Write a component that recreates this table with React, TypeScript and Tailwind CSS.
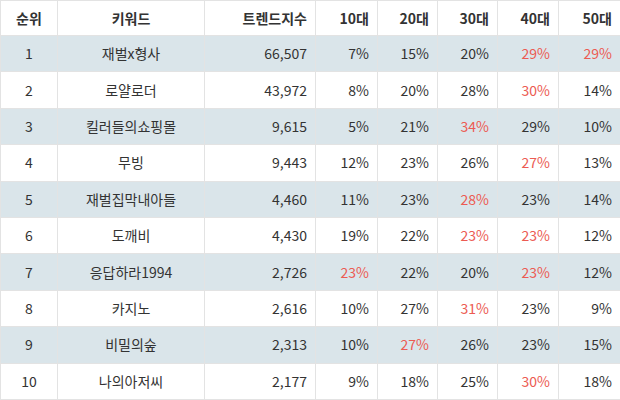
import React from "react";

type Row = { rank: number; kw: string; idx: string; v: [string, boolean][] };

const rows: Row[] = [
  { rank: 1, kw: "재벌x형사", idx: "66,507", v: [["7%", false], ["15%", false], ["20%", false], ["29%", true], ["29%", true]] },
  { rank: 2, kw: "로얄로더", idx: "43,972", v: [["8%", false], ["20%", false], ["28%", false], ["30%", true], ["14%", false]] },
  { rank: 3, kw: "킬러들의쇼핑몰", idx: "9,615", v: [["5%", false], ["21%", false], ["34%", true], ["29%", false], ["10%", false]] },
  { rank: 4, kw: "무빙", idx: "9,443", v: [["12%", false], ["23%", false], ["26%", false], ["27%", true], ["13%", false]] },
  { rank: 5, kw: "재벌집막내아들", idx: "4,460", v: [["11%", false], ["23%", false], ["28%", true], ["23%", false], ["14%", false]] },
  { rank: 6, kw: "도깨비", idx: "4,430", v: [["19%", false], ["22%", false], ["23%", true], ["23%", true], ["12%", false]] },
  { rank: 7, kw: "응답하라1994", idx: "2,726", v: [["23%", true], ["22%", false], ["20%", false], ["23%", true], ["12%", false]] },
  { rank: 8, kw: "카지노", idx: "2,616", v: [["10%", false], ["27%", false], ["31%", true], ["23%", false], ["9%", false]] },
  { rank: 9, kw: "비밀의숲", idx: "2,313", v: [["10%", false], ["27%", true], ["26%", false], ["23%", false], ["15%", false]] },
  { rank: 10, kw: "나의아저씨", idx: "2,177", v: [["9%", false], ["18%", false], ["25%", false], ["30%", true], ["18%", false]] },
];

const heads = ["10대", "20대", "30대", "40대", "50대"];

export default function App() {
  return (
    <div className="w-[620px] h-[400px] bg-white overflow-hidden font-['Noto_Sans_CJK_KR','Noto_Sans',sans-serif] text-[14px] text-[#333333]">
      <div className="grid grid-cols-[57px_147px_111px_62px_60px_60px_61px_62px] border-t border-l border-[#e3e3e3]">
        <div className="h-[35px] flex items-center justify-center font-bold border-r border-b border-[#e3e3e3]">순위</div>
        <div className="h-[35px] flex items-center justify-center font-bold border-r border-b border-[#e3e3e3]">키워드</div>
        <div className="h-[35px] flex items-center justify-end pr-2 font-bold border-r border-b border-[#e3e3e3]">트렌드지수</div>
        {heads.map((h) => (
          <div key={h} className="h-[35px] flex items-center justify-end pr-2 font-bold border-r border-b border-[#e3e3e3]">{h}</div>
        ))}
        {rows.map((r, i) => {
          const bg = i % 2 === 0 ? "bg-[#dae5ea]" : "bg-white";
          return (
            <React.Fragment key={r.rank}>
              <div className={`h-[36.4px] flex items-center justify-center border-r border-b border-[#e3e3e3] ${bg}`}>{r.rank}</div>
              <div className={`h-[36.4px] flex items-center justify-center border-r border-b border-[#e3e3e3] ${bg}`}>{r.kw}</div>
              <div className={`h-[36.4px] flex items-center justify-end pr-2 border-r border-b border-[#e3e3e3] ${bg}`}>{r.idx}</div>
              {r.v.map(([val, red], j) => (
                <div
                  key={j}
                  className={`h-[36.4px] flex items-center justify-end pr-2 border-r border-b border-[#e3e3e3] ${bg} ${red ? "text-[#ec5b52]" : ""}`}
                >
                  {val}
                </div>
              ))}
            </React.Fragment>
          );
        })}
      </div>
    </div>
  );
}
